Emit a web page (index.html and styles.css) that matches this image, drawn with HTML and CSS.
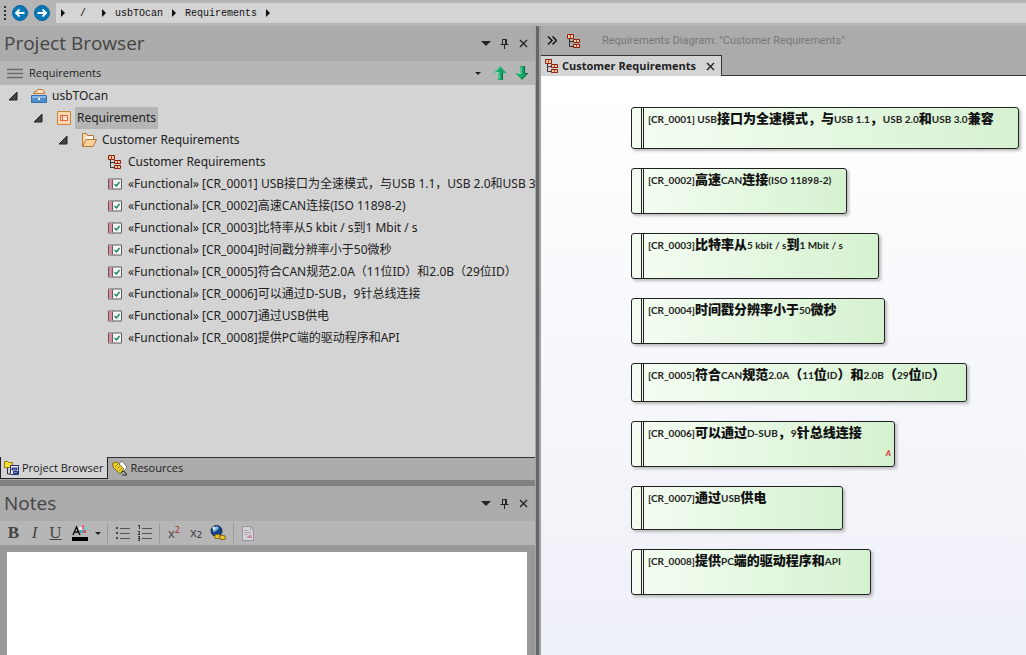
FILE: index.html
```html
<!DOCTYPE html>
<html lang="zh-CN">
    <head>
        <meta charset="utf-8">
        <title>usbTOcan - Requirements</title>
        <link rel="stylesheet" href="styles.css">
    </head>
    <body>
        <!-- shared icons -->
        <svg class="defs" aria-hidden="true">
            <symbol id="i-caret" viewBox="0 0 6 8"><path d="M1 0l4 4-4 4z" fill="#111"/></symbol>
            <symbol id="i-open" viewBox="0 0 10 10"><path d="M9 1v8H1z" fill="#444" stroke="#222"/></symbol>
            <symbol id="i-diagram" viewBox="0 0 14 14">
                <path d="M2.500 5v7.500H7M2.500 7.500H7" fill="none" stroke="#333"/>
                <path d="M.5.5h6v4h-6zM6.500 5.500h6v3h-6zM6.500 10.500h6v3h-6z" fill="#f3cf9c" stroke="#8f1a12"/>
                <path d="M3.500 .5v4M9.500 5.500v3M9.500 10.500v3" stroke="#b8412c"/>
            </symbol>
            <symbol id="i-req" viewBox="0 0 14 11">
                <path d="M.5.5h13v10H.5z" fill="#f4f6f6" stroke="#5d5963"/>
                <path d="M1 1h3v9H1z" fill="#d98c9c"/><path d="M4.500 1v9" stroke="#6b5260"/>
                <path d="M6.500 5.500l2 2 3-4" fill="none" stroke="#198060" stroke-width="1.400"/>
            </symbol>
            <symbol id="i-down" viewBox="0 0 10 5"><path d="M0 0h10L5 5z" fill="#222"/></symbol>
            <symbol id="i-pin" viewBox="0 0 9 10"><path d="M2.500 5.500v-5h4v5M.5 5.500h8M4.500 6v4M5.500 1v4" fill="none" stroke="#222"/></symbol>
            <symbol id="i-close" viewBox="0 0 9 9"><path d="M1 1l7 7M8 1L1 8" stroke="#222" stroke-width="1.400"/></symbol>
        </svg>

        <div class="app">
            <nav class="pathbar">
                <span class="grip"></span>
                <button class="nav" aria-label="Back"><svg width="16" height="16" viewBox="0 0 16 16"><circle cx="8" cy="8" r="7.500" fill="#0877b5" stroke="#06639b"/><path d="M12.500 8H4M7.500 4.500L4 8l3.500 3.500" fill="none" stroke="#fff" stroke-width="1.800"/></svg></button>
                <button class="nav" aria-label="Forward"><svg width="16" height="16" viewBox="0 0 16 16"><circle cx="8" cy="8" r="7.500" fill="#0877b5" stroke="#06639b"/><path d="M3.500 8H12M8.500 4.500L12 8l-3.500 3.500" fill="none" stroke="#fff" stroke-width="1.800"/></svg></button>
                <div class="crumbs">
                    <svg class="caret"><use href="#i-caret"/></svg>
                    <a href="#" class="root">/</a>
                    <svg class="caret"><use href="#i-caret"/></svg>
                    <a href="#">usbTOcan</a>
                    <svg class="caret"><use href="#i-caret"/></svg>
                    <a href="#">Requirements</a>
                    <svg class="caret"><use href="#i-caret"/></svg>
                </div>
            </nav>

            <div class="main">
                <div class="side">
                    <section class="browser">
                        <header class="title">
                            <h2>Project Browser</h2>
                            <button aria-label="Menu"><svg width="10" height="5"><use href="#i-down"/></svg></button>
                            <button aria-label="Pin"><svg width="9" height="10"><use href="#i-pin"/></svg></button>
                            <button aria-label="Close"><svg width="9" height="9"><use href="#i-close"/></svg></button>
                        </header>
                        <div class="subbar">
                            <button aria-label="Options"><svg width="16" height="11" viewBox="0 0 16 11"><path d="M0 1.500h16M0 5.500h16M0 9.500h16" stroke="#6c6c6c" stroke-width="1.500"/></svg></button>
                            <span class="where">Requirements</span>
                            <button aria-label="More"><svg width="6" height="3"><use href="#i-down"/></svg></button>
                            <button aria-label="Move up"><svg width="14" height="14" viewBox="0 0 14 14"><path d="M7 0l6.500 7H10v7H5V7H.5z" fill="#16a566"/><path d="M7 1L2 6.500h4V13" fill="none" stroke="#7fe0b0"/><path d="M9.500 7v7" stroke="#08683d"/></svg></button>
                            <button aria-label="Move down"><svg width="14" height="14" viewBox="0 0 14 14"><path d="M7 14l6.500-7H10V0H5v7H.5z" fill="#16a566"/><path d="M6 1v6.500H2.500" fill="none" stroke="#7fe0b0"/><path d="M9.500 0v7.500h3L7 13" fill="none" stroke="#08683d"/></svg></button>
                        </div>
                        <ul class="tree">
                            <li>
                                <div class="row">
                                    <svg class="open"><use href="#i-open"/></svg>
                                    <svg class="icon" viewBox="0 0 16 16"><path d="M3.500 6V3.500h2l1-2h5l1 2h1V6" fill="#f6dfbd" stroke="#c27a3b"/><path d="M2 5.500h12" stroke="#c27a3b"/><path d="M.5 7.500h15v7H.5z" fill="#4f8fcd" stroke="#3470ab"/><path d="M1 8h14v2H1z" fill="#86b6e2"/><path d="M7 10h2v2H7z" fill="#fff"/></svg>
                                    <span>usbTOcan</span>
                                </div>
                                <ul>
                                    <li>
                                        <div class="row">
                                            <svg class="open"><use href="#i-open"/></svg>
                                            <svg class="icon" viewBox="0 0 16 16"><path d="M1.500 1.500h13v13h-13z" fill="#fbd7aa" stroke="#c9853f"/><path d="M4.500 5.500h7v5h-7zM6.500 5.500v5" fill="#fce3c8" stroke="#e0624c"/></svg>
                                            <span class="selected">Requirements</span>
                                        </div>
                                        <ul>
                                            <li>
                                                <div class="row">
                                                    <svg class="open"><use href="#i-open"/></svg>
                                                    <svg class="icon" viewBox="0 0 16 16"><path d="M1.500 14V1.500h4l1 2h6V7" fill="#fbd9ab" stroke="#b9763a"/><path d="M5 4.500h7V7H5z" fill="#fff"/><path d="M1.500 14.500L5 7.500h10.500L12 14.500z" fill="#fcd39d" stroke="#b9763a"/></svg>
                                                    <span>Customer Requirements</span>
                                                </div>
                                                <ul class="leafs">
                                                    <li class="row"><svg class="icon small"><use href="#i-diagram"/></svg><span>Customer Requirements</span></li>
                                                    <li class="row"><svg class="icon small"><use href="#i-req"/></svg><span>«Functional» [CR_0001] USB接口为全速模式，与USB 1.1，USB 2.0和USB 3.0兼容</span></li>
                                                    <li class="row"><svg class="icon small"><use href="#i-req"/></svg><span>«Functional» [CR_0002]高速CAN连接(ISO 11898-2)</span></li>
                                                    <li class="row"><svg class="icon small"><use href="#i-req"/></svg><span>«Functional» [CR_0003]比特率从5 kbit / s到1 Mbit / s</span></li>
                                                    <li class="row"><svg class="icon small"><use href="#i-req"/></svg><span>«Functional» [CR_0004]时间戳分辨率小于50微秒</span></li>
                                                    <li class="row"><svg class="icon small"><use href="#i-req"/></svg><span>«Functional» [CR_0005]符合CAN规范2.0A（11位ID）和2.0B（29位ID）</span></li>
                                                    <li class="row"><svg class="icon small"><use href="#i-req"/></svg><span>«Functional» [CR_0006]可以通过D-SUB，9针总线连接</span></li>
                                                    <li class="row"><svg class="icon small"><use href="#i-req"/></svg><span>«Functional» [CR_0007]通过USB供电</span></li>
                                                    <li class="row"><svg class="icon small"><use href="#i-req"/></svg><span>«Functional» [CR_0008]提供PC端的驱动程序和API</span></li>
                                                </ul>
                                            </li>
                                        </ul>
                                    </li>
                                </ul>
                            </li>
                        </ul>
                        <div class="tabs">
                            <button class="active"><svg width="16" height="16" viewBox="0 0 16 16"><path d="M.5 7.500v-6h3l1 1h4v5z" fill="#f6df36" stroke="#8c7a10"/><path d="M3.500 8v6H6" fill="none" stroke="#333"/><path d="M6.500 5.500h8v9h-8z" fill="#e9ecff" stroke="#25306f"/><path d="M8 8h5v2H8zM9.500 11.500h4v2h-4z" fill="#8590d0" stroke="#25306f"/></svg>Project Browser</button>
                            <button><svg width="16" height="16" viewBox="0 0 16 16"><path d="M6 5l4-4 5 6-3 5z" fill="#fff" stroke="#777"/><path d="M1 3l4-1 7 7-4 5-7-7z" fill="#f0d52e" stroke="#7d6908"/><path d="M3 7l4-4M5 9l4-4M7 11l4-4" stroke="#957d10"/><path d="M9 13l2-2 4 3M10 15h5" fill="none" stroke="#222"/></svg>Resources</button>
                        </div>
                    </section>

                    <section class="notes">
                        <header class="title">
                            <h2><label for="notes">Notes</label></h2>
                            <button aria-label="Menu"><svg width="10" height="5"><use href="#i-down"/></svg></button>
                            <button aria-label="Pin"><svg width="9" height="10"><use href="#i-pin"/></svg></button>
                            <button aria-label="Close"><svg width="9" height="9"><use href="#i-close"/></svg></button>
                        </header>
                        <div class="toolbar">
                            <button class="letter bold">B</button>
                            <button class="letter italic">I</button>
                            <button class="letter under">U</button>
                            <button class="color" aria-label="Text color"><svg width="16" height="16" viewBox="0 0 16 16"><path d="M1 10l3.500-8L8 10M2.500 7h4" fill="none" stroke="#111" stroke-width="1.500"/><path d="M7 2h3v3H7z" fill="#eee"/><path d="M10 0h2v4h-2z" fill="#ee5c82"/><path d="M12 2h3v3h-3z" fill="#62d9d1"/><path d="M8 5h3v3H8z" fill="#38b8b0"/><path d="M11 5h3v3h-3z" fill="#e84c68"/><path d="M0 12h16v4H0z" fill="#000"/></svg></button>
                            <button class="drop" aria-label="Pick color"><svg width="6" height="3"><use href="#i-down"/></svg></button>
                            <i></i>
                            <button aria-label="Bullet list"><svg width="15" height="14" viewBox="0 0 15 14"><path d="M5 2.500h10M5 7.500h10M5 12.500h10" stroke="#555"/><path d="M1 1h2v2H1zM1 6h2v2H1zM1 11h2v2H1z" fill="#444"/></svg></button>
                            <button aria-label="Numbered list"><svg width="15" height="16" viewBox="0 0 15 16"><path d="M5 3.500h10M5 8.500h10M5 13.500h10" stroke="#555"/><path d="M1 .5h1.500V4M1 6.500h1.500v1.500L1 9.500h2M1 11.500h1.500v4H1M1 13.500h1.500" fill="none" stroke="#333"/></svg></button>
                            <i></i>
                            <button class="script">x<sup>2</sup></button>
                            <button class="script low">x<sub>2</sub></button>
                            <button aria-label="Hyperlink"><svg width="16" height="16" viewBox="0 0 16 16"><circle cx="6.500" cy="6" r="5.500" fill="#174583" stroke="#102d59"/><path d="M3 3l4-2 2 2-3 3-3 1z" fill="#7eb4df"/><circle cx="4" cy="3" r="1.500" fill="#e7f5ff"/><rect x="4.500" y="9.500" width="6" height="4" rx="2" fill="#eac32e" stroke="#76580b"/><rect x="9.500" y="10.500" width="6" height="4" rx="2" fill="#eac32e" stroke="#76580b"/></svg></button>
                            <i></i>
                            <button aria-label="Glossary"><svg width="14" height="15" viewBox="0 0 14 15"><path d="M1.500.5h8l3 3v11h-11z" fill="#d6d3d9" stroke="#96919b"/><path d="M9.500.5v3h3M3 4.500h5M3 6.500h7M3 8.500h4" fill="none" stroke="#aaa4b0"/><path d="M5 12l5-4 1 4z" fill="#c88aa5"/></svg></button>
                        </div>
                        <div class="editor"><textarea id="notes"></textarea></div>
                    </section>
                </div>
                <div class="splitter"></div>

                <section class="diagram">
                    <header class="caption">
                        <button aria-label="Expand"><svg width="10" height="9" viewBox="0 0 10 9"><path d="M1 .5l4 4-4 4M5.500 .5l4 4-4 4" fill="none" stroke="#111" stroke-width="1.500"/></svg></button>
                        <svg width="14" height="14"><use href="#i-diagram"/></svg>
                        <span>Requirements Diagram: "Customer Requirements"</span>
                    </header>
                    <div class="views">
                        <div class="view">
                            <svg width="14" height="14"><use href="#i-diagram"/></svg>
                            <b>Customer Requirements</b>
                            <button aria-label="Close view"><svg width="9" height="9"><use href="#i-close"/></svg></button>
                        </div>
                    </div>
                    <div class="canvas">
                        <div class="req r1">[CR_0001] USB<b>接口为全速模式，与</b>USB 1.1<b>，</b>USB 2.0<b>和</b>USB 3.0<b>兼容</b></div>
                        <div class="req r2">[CR_0002]<b>高速</b>CAN<b>连接</b>(ISO 11898-2)</div>
                        <div class="req r3">[CR_0003]<b>比特率从</b>5 kbit / s<b>到</b>1 Mbit / s</div>
                        <div class="req r4">[CR_0004]<b>时间戳分辨率小于</b>50<b>微秒</b></div>
                        <div class="req r5">[CR_0005]<b>符合</b>CAN<b>规范</b>2.0A<b>（</b>11<b>位</b>ID<b>）和</b>2.0B<b>（</b>29<b>位</b>ID<b>）</b></div>
                        <div class="req r6">[CR_0006]<b>可以通过</b>D-SUB<b>，</b>9<b>针总线连接</b><em>A</em></div>
                        <div class="req r7">[CR_0007]<b>通过</b>USB<b>供电</b></div>
                        <div class="req r8">[CR_0008]<b>提供</b>PC<b>端的驱动程序和</b>API</div>
                    </div>
                </section>
            </div>
        </div>
    </body>
</html>
```
FILE: styles.css
```css
*{
    box-sizing: border-box;
    margin: 0;
    padding: 0;
}
body{
    font: 11px/20px "Open Sans", "Noto Sans CJK SC", sans-serif;
    color: #222;
    overflow: hidden;
}
button{
    display: flex;
    align-items: center;
    justify-content: center;
    border: 0;
    background: none;
    font: inherit;
    color: inherit;
}
svg{
    flex: none;
    display: block;
}
ul{
    list-style: none;
}
.defs{
    position: absolute;
    width: 0;
    height: 0;
}
.app{
    display: flex;
    flex-direction: column;
    height: 100vh;
    background: #ababab;
}

/* path bar */
.pathbar{
    display: flex;
    align-items: center;
    height: 26px;
    padding: 3px 0;
    background: #b5b5b5;
}
.grip{
    width: 2px;
    height: 15px;
    margin: 0 6px 0 4px;
    background: repeating-linear-gradient(#333 0 2px, transparent 2px 4px);
}
.nav{
    width: 16px;
    margin-right: 6px;
}
.crumbs{
    flex: 1;
    display: flex;
    align-items: center;
    gap: 8px;
    height: 20px;
    padding-left: 4px;
    background: #d4d4d4;
    font: 10px/20px "Liberation Mono", monospace;
}
.crumbs a{
    padding-top: 2px;
    color: #111;
    text-decoration: none;
}
.crumbs .root{
    padding: 2px 7px 0 6px;
}
.caret{
    width: 6px;
    height: 8px;
}

/* docked panels */
.main{
    flex: 1;
    display: flex;
    min-height: 0;
}
.side{
    flex: none;
    display: flex;
    flex-direction: column;
    width: 535px;
}
.splitter{
    flex: none;
    width: 6px;
    background: linear-gradient(90deg, #a5a5a5 0 1px, #666 1px 4px, #a0a0a0 4px);
}
.browser{
    flex: 1;
    display: flex;
    flex-direction: column;
    min-height: 0;
}
.title{
    flex: none;
    display: flex;
    align-items: center;
    height: 35px;
    padding: 0 2px 0 4px;
    background: #ababab;
}
.title h2{
    flex: 1;
    padding-bottom: 2px;
    font-size: 19px;
    font-weight: 400;
    color: #444;
}
.title button{
    width: 19px;
    height: 20px;
}
.subbar{
    display: flex;
    align-items: center;
    height: 24px;
    padding: 0 4px 0 6px;
    background: #b6b6b6;
}
.subbar button{
    min-width: 18px;
}
.subbar button + button{
    margin-left: 4px;
}
.where{
    flex: 1;
    padding-left: 5px;
}
.tree{
    flex: 1;
    background: #d4d4d4;
    overflow: hidden;
}
.tree ul{
    padding-left: 25px;
}
.row{
    display: flex;
    align-items: center;
    gap: 3px;
    height: 22px;
    padding-left: 8px;
    font: 12px/22px "Noto Sans", "Noto Sans CJK SC", sans-serif;
    white-space: nowrap;
}
.open{
    width: 10px;
    height: 10px;
    margin-right: 10px;
}
.icon{
    width: 16px;
    height: 16px;
}
.row span{
    padding: 0 2px;
}
.selected{
    background: #b5b5b5;
}
.tree .leafs .row{
    padding-left: 33px;
}
.icon.small{
    width: 14px;
    height: 14px;
    margin-right: 1px;
}
.tabs{
    display: flex;
    height: 23px;
    border-top: 1px solid #333;
    background: #ababab;
}
.tabs button{
    gap: 2px;
    height: 20px;
    padding: 0 4px;
}
.tabs .active{
    height: 22px;
    margin-top: -1px;
    padding-left: 3px;
    border: 1px solid #222;
    border-top: 0;
    background: #d4d4d4;
}

/* notes */
.notes{
    flex: none;
    display: flex;
    flex-direction: column;
    height: 175px;
    border-top: 6px solid #808080;
}
.toolbar{
    display: flex;
    align-items: center;
    height: 24px;
    padding-left: 3px;
    background: #b6b6b6;
}
.toolbar button{
    width: 22px;
    height: 22px;
    color: #444;
}
.toolbar i{
    width: 1px;
    height: 20px;
    margin: 0 3px 0 4px;
    background: #999;
}
.toolbar .letter{
    width: 21px;
    font: 17px "Liberation Serif", serif;
}
.toolbar .bold{
    font-weight: 700;
}
.toolbar .italic{
    font-style: italic;
}
.toolbar .under{
    text-decoration: underline;
}
.toolbar .color{
    width: 27px;
}
.toolbar .drop{
    width: 10px;
}
.toolbar .script{
    font-size: 13px;
}
.script sup, .script sub{
    font-size: 9px;
    line-height: 9px;
}
.script sup{
    align-self: flex-start;
    margin-top: 3px;
    color: #a22;
}
.script sub{
    align-self: flex-end;
    margin-bottom: 2px;
    color: #225;
}
.toolbar .low{
    line-height: 14px;
    padding-bottom: 3px;
}
.editor{
    flex: 1;
    display: flex;
    padding: 7px 8px 0 7px;
    background: #999;
}
.editor textarea{
    flex: 1;
    border: 0;
    resize: none;
    background: #fff;
}

/* diagram */
.diagram{
    flex: 1;
    display: flex;
    flex-direction: column;
    min-width: 0;
}
.caption{
    display: flex;
    align-items: center;
    gap: 10px;
    height: 29px;
    padding-left: 6px;
    font: 11px Roboto, sans-serif;
    color: #777;
}
.caption span{
    padding-left: 11px;
}
.views{
    display: flex;
    height: 21px;
    border-bottom: 1px solid #333;
}
.view{
    display: flex;
    align-items: center;
    gap: 3px;
    height: 21px;
    padding: 0 6px 0 4px;
    border: 1px solid #333;
    border-width: 1px 1px 0 0;
    background: #d4d4d4;
}
.view button{
    margin-left: 7px;
}
.canvas{
    position: relative;
    flex: 1;
    background: linear-gradient(#fff, #eef0f8);
}
/* requirement box, double rule on the left */
.req{
    position: absolute;
    left: 90px;
    height: 46px;
    padding: 2px 0 0 16px;
    border: 1px solid #222;
    border-radius: 3px;
    background:
        linear-gradient(#222, #222) 9px 0/1px 100% no-repeat,
        linear-gradient(#222, #222) 11px 0/1px 100% no-repeat,
        linear-gradient(90deg, #f5fdf3, #d5f2d0);
    box-shadow: 2px 2px 3px #bbb;
    font: 700 10px/16px Lato, "Noto Sans CJK SC", sans-serif;
    color: #222;
    white-space: nowrap;
}
.req b{
    font-size: 13px;
    color: #111;
}
.req em{
    position: absolute;
    right: 3px;
    bottom: 5px;
    font-size: 8px;
    color: #d33;
    line-height: 16px;
}
.r1{ top: 31px; width: 388px; height: 42px; }
.r2{ top: 92px; width: 216px; }
.r3{ top: 157px; width: 248px; }
.r4{ top: 222px; width: 254px; }
.r5{ top: 287px; width: 336px; height: 39px; }
.r6{ top: 345px; width: 264px; }
.r7{ top: 410px; width: 212px; height: 44px; }
.r8{ top: 473px; width: 240px; }
```
